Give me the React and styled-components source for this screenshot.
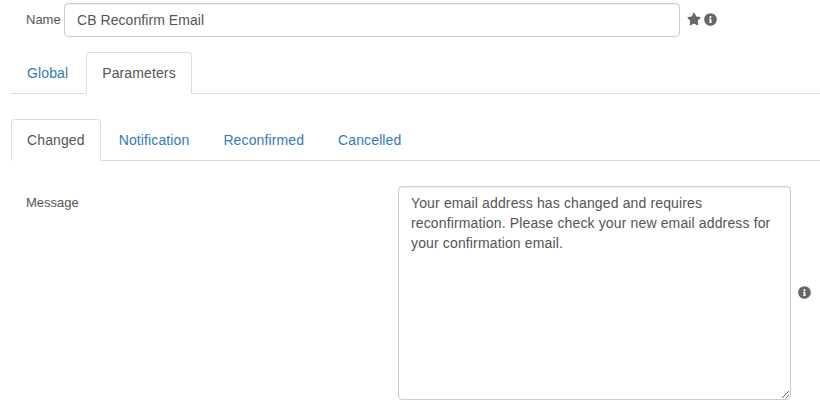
import React from "react";
import styled, { createGlobalStyle } from "styled-components";
import { FaStar, FaInfoCircle } from "react-icons/fa";

const Global = createGlobalStyle`
  html, body { margin: 0; padding: 0; background: #fff; overflow: hidden; }
  body { font-family: "Liberation Sans", Arial, sans-serif; font-size: 14px; line-height: 20px; color: #555; }
  * { box-sizing: border-box; }
`;
const Page = styled.div`
  width: 820px; height: 408px; overflow: hidden;
  padding: 3px 0 0 11px;
`;
const NameRow = styled.div`
  display: flex; align-items: center; height: 34px;
`;
const NameLabel = styled.label`
  font-size: 13px; color: #555; width: 53px; padding-left: 15px; flex: none;
`;
const NameInput = styled.input`
  width: 616px; height: 34px; flex: none;
  padding: 6px 12px; border: 1px solid #ccc; border-radius: 4px;
  font: 14px/20px "Liberation Sans", Arial, sans-serif; color: #555;
  letter-spacing: 0.06px;
  box-shadow: inset 0 1px 1px rgba(0,0,0,.075); outline: none;
`;
const Icons = styled.div`
  display: flex; align-items: center; gap: 3px; margin: -2px 0 0 7px; color: #666;
`;
const Tabs = styled.ul`
  list-style: none; margin: ${p => p.$top}px 0 0; padding: 0;
  display: flex; height: 42px; border-bottom: 1px solid #ddd;
`;
const Tab = styled.li`
  height: 42px; margin-right: 2px;
  padding: 10px 15px; border: 1px solid ${p => p.$active ? "#ddd" : "transparent"};
  border-bottom-color: ${p => p.$active ? "#fff" : "transparent"};
  border-radius: 4px 4px 0 0; background: ${p => p.$active ? "#fff" : "transparent"};
  color: ${p => p.$active ? "#555" : "#337ab7"};
  letter-spacing: 0.12px;
`;
const MessageRow = styled.div`
  display: flex; margin-top: 25px;
`;
const MessageLabel = styled.label`
  width: 387px; flex: none; padding: 7px 0 0 15px; font-size: 13px; color: #555;
`;
const Area = styled.textarea`
  width: 393px; height: 214px; flex: none; padding: 6px 12px;
  border: 1px solid #ccc; border-radius: 4px; color: #555;
  font: 14px/20px "Liberation Sans", Arial, sans-serif;
  letter-spacing: 0.14px;
  box-shadow: inset 0 1px 1px rgba(0,0,0,.075); outline: none;
`;
const Help = styled.div`
  display: flex; align-items: center; margin-left: 7px; padding-bottom: 2px; color: #666;
`;

export default function App() {
  return (
    <Page>
      <Global />
      <NameRow>
        <NameLabel>Name</NameLabel>
        <NameInput defaultValue="CB Reconfirm Email" />
        <Icons><FaStar size={14} /><FaInfoCircle size={13} /></Icons>
      </NameRow>
      <Tabs $top={15}>
        <Tab>Global</Tab>
        <Tab $active>Parameters</Tab>
      </Tabs>
      <Tabs $top={25}>
        <Tab $active>Changed</Tab>
        <Tab>Notification</Tab>
        <Tab>Reconfirmed</Tab>
        <Tab>Cancelled</Tab>
      </Tabs>
      <MessageRow>
        <MessageLabel>Message</MessageLabel>
        <Area defaultValue="Your email address has changed and requires reconfirmation. Please check your new email address for your confirmation email." />
        <Help><FaInfoCircle size={13} /></Help>
      </MessageRow>
    </Page>
  );
}
